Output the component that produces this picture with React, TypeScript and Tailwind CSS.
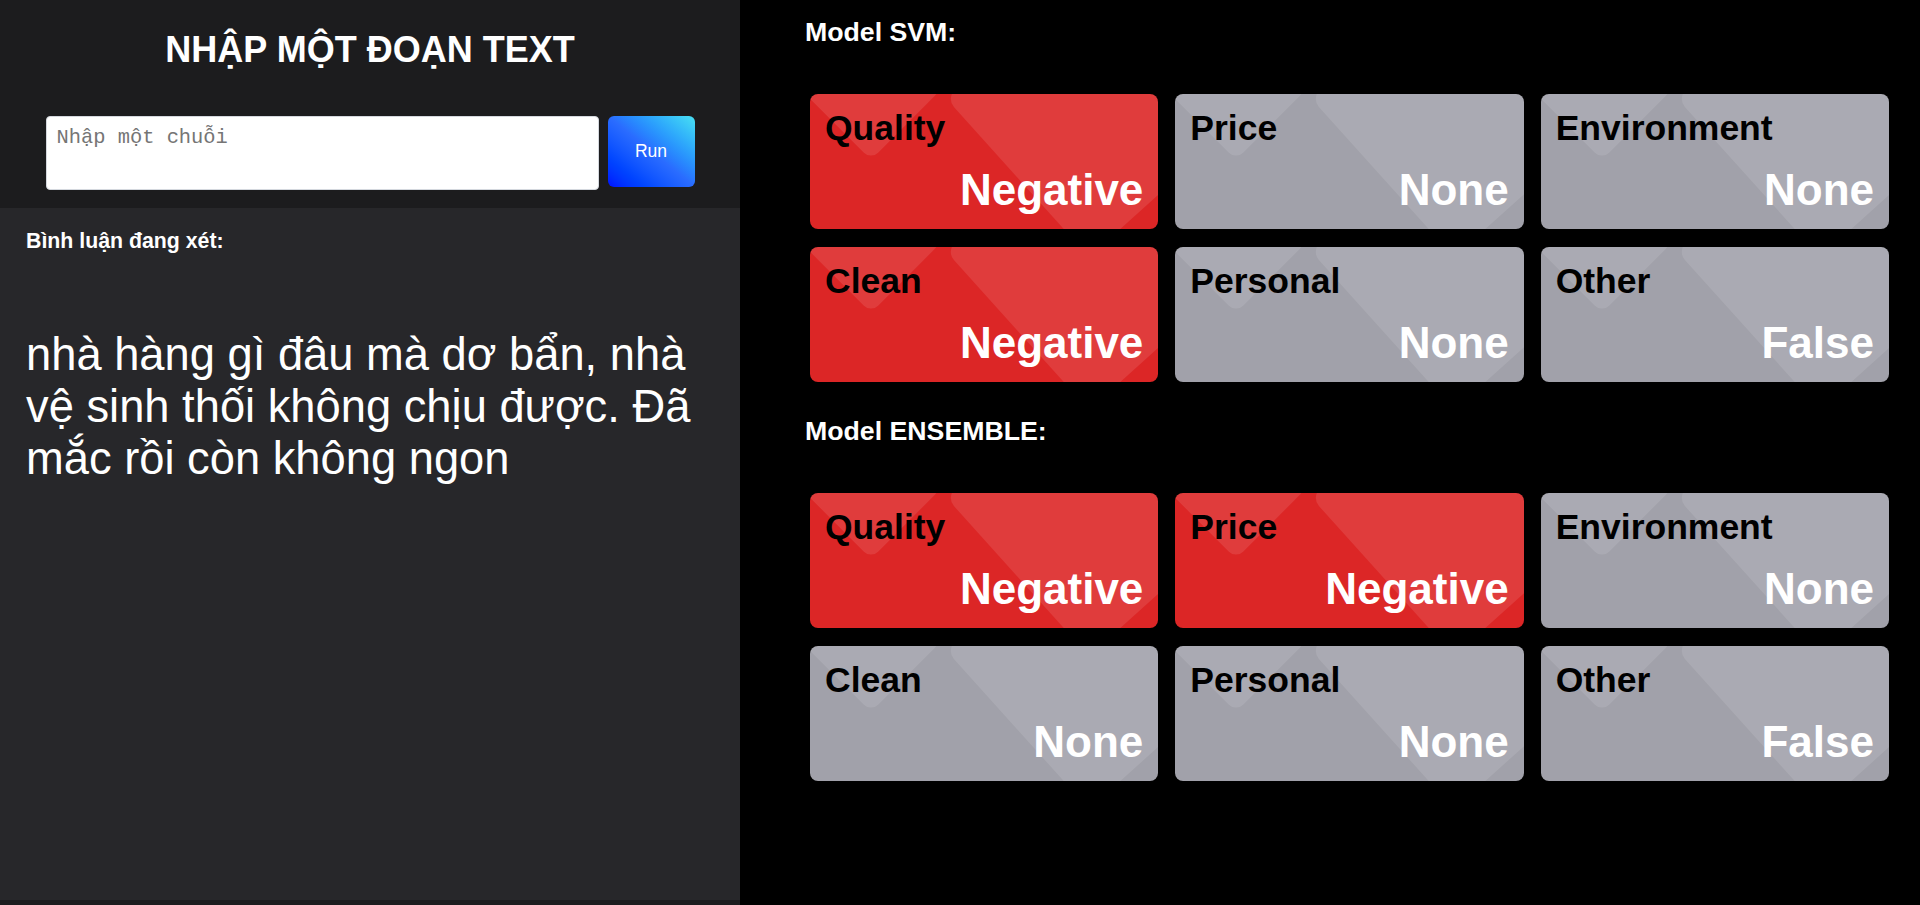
const svmResults = [
  { label: 'Quality', value: 'Negative' },
  { label: 'Price', value: 'None' },
  { label: 'Environment', value: 'None' },
  { label: 'Clean', value: 'Negative' },
  { label: 'Personal', value: 'None' },
  { label: 'Other', value: 'False' },
];

const ensembleResults = [
  { label: 'Quality', value: 'Negative' },
  { label: 'Price', value: 'Negative' },
  { label: 'Environment', value: 'None' },
  { label: 'Clean', value: 'None' },
  { label: 'Personal', value: 'None' },
  { label: 'Other', value: 'False' },
];

const AspectCard = ({ label, value }: { label: string; value: string }) => {
  const negative = value === 'Negative';
  return (
    <div
      className={`relative flex h-[135px] flex-col justify-between overflow-hidden rounded-[8px] px-[15px] pt-[14px] pb-[14px] ${
        negative ? 'bg-[#dc2626]' : 'bg-[#a1a1aa]'
      }`}
    >
      <div className="absolute left-[11px] top-[-55px] h-[100px] w-[100px] rotate-45 rounded-[10px] bg-white/10" />
      <div className="absolute left-[180px] top-[-95px] h-[214px] w-[214px] rotate-[48deg] rounded-[12px] bg-white/10" />
      <p className="relative z-10 text-[35.5px] font-bold leading-[41px] text-black">{label}</p>
      <p className="relative z-10 text-right text-[44px] font-bold leading-[51px] text-white">{value}</p>
    </div>
  );
};

const ModelBlock = ({ title, results, className }: { title: string; results: typeof svmResults; className?: string }) => (
  <div className={className}>
    <h2 className="text-[26.7px] font-bold leading-[30px] text-white">{title}</h2>
    <div className="ml-[5px] mt-[47px] grid w-[1079px] grid-cols-3 gap-x-[17px] gap-y-[18px]">
      {results.map((r) => (
        <AspectCard key={r.label} label={r.label} value={r.value} />
      ))}
    </div>
  </div>
);

export default function App() {
  return (
    <div className="flex h-[905px] w-full overflow-hidden bg-black" style={{ fontFamily: '"Liberation Sans", Arial, sans-serif' }}>
      <div className="flex w-[740px] shrink-0 flex-col bg-[#1c1c1e]">
        <div className="flex h-[208px] flex-col items-center pt-[29px]">
          <h1 className="text-[36px] font-bold leading-[41px] text-white">NHẬP MỘT ĐOẠN TEXT</h1>
          <div className="mt-[46px] flex items-start gap-[9px]">
            <textarea
              placeholder={'Nh\u1EADp m\u1ED9t chu\u1ED7i'}
              className="h-[74px] w-[553px] resize-none rounded-[4px] border border-[#d4d8de] bg-white px-[10px] pt-[9px] text-[20.4px] leading-[24px] text-black outline-none placeholder:text-[#757575]"
              style={{ fontFamily: '"Liberation Mono", monospace' }}
            />
            <button className="h-[71px] w-[87px] rounded-[6px] bg-linear-to-tr from-[#0008ff] via-[#2a6cff] to-[#4ae0f2] text-[17.5px] text-white">
              Run
            </button>
          </div>
        </div>
        <div className="h-[692px] bg-[#27272a] px-[26px] pt-[21px]">
          <p className="text-[21.3px] font-bold leading-[25px] text-white">Bình luận đang xét:</p>
          <p className="mt-[75px] text-[45.3px] leading-[52px] text-white">
            nhà hàng gì đâu mà dơ bẩn, nhà vệ sinh thối không chịu được. Đã mắc rồi còn không ngon
          </p>
        </div>
      </div>
      <div className="flex-1 pl-[65px] pt-[17px]">
        <ModelBlock title="Model SVM:" results={svmResults} />
        <ModelBlock title="Model ENSEMBLE:" results={ensembleResults} className="mt-[34px]" />
      </div>
    </div>
  );
}
